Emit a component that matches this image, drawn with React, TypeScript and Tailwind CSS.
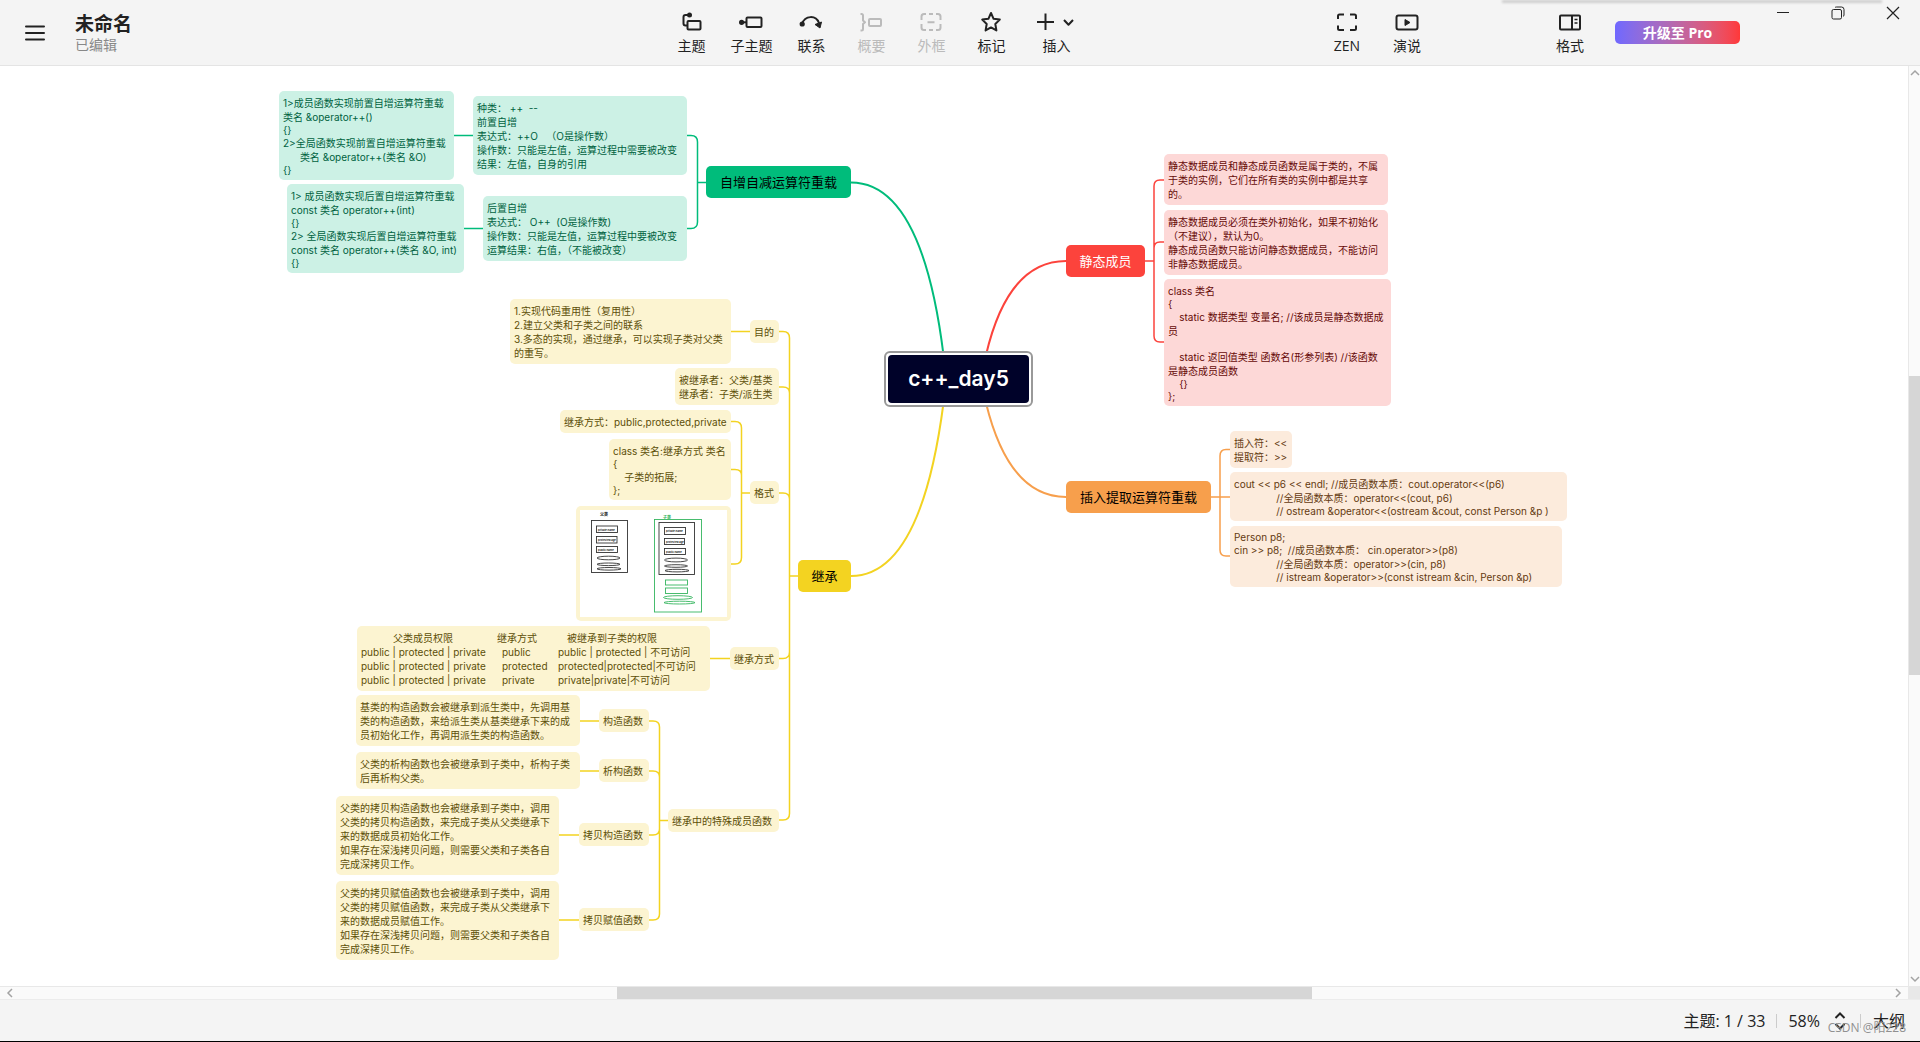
import type { ReactNode } from "react";

type Tone = "green" | "yellow" | "red" | "orange";

type Topic = {
  x: number;
  y: number;
  w: number;
  tone: Tone;
  lines: string[];
};

const toneClass: Record<Tone, string> = {
  green: "bg-[#ccf1e5] text-[#00623f]",
  yellow: "bg-[#fcf4d1] text-[#5c4f08]",
  red: "bg-[#fdd8d7] text-[#660a07]",
  orange: "bg-[#fcebdc] text-[#643a10]"
};

// x / y are canvas coordinates, the canvas starts right below the toolbar
const topics: Topic[] = [
  {
    x: 279, y: 25, w: 175, tone: "green",
    lines: [
      "1>成员函数实现前置自增运算符重载",
      "类名 &operator++()",
      "{}",
      "2>全局函数实现前置自增运算符重载",
      "      类名 &operator++(类名 &O)",
      "{}"
    ]
  },
  {
    x: 287, y: 118, w: 177, tone: "green",
    lines: [
      "1> 成员函数实现后置自增运算符重载",
      "const 类名 operator++(int)",
      "{}",
      "2> 全局函数实现后置自增运算符重载",
      "const 类名 operator++(类名 &O, int)",
      "{}"
    ]
  },
  {
    x: 473, y: 30, w: 214, tone: "green",
    lines: [
      "种类： ++  --",
      "前置自增",
      "表达式：++O   （O是操作数）",
      "操作数：只能是左值，运算过程中需要被改变",
      "结果：左值，自身的引用"
    ]
  },
  {
    x: 483, y: 130, w: 204, tone: "green",
    lines: ["后置自增", "表达式： O++  (O是操作数)", "操作数：只能是左值，运算过程中要被改变", "运算结果：右值，（不能被改变）"]
  },
  {
    x: 510, y: 233, w: 221, tone: "yellow",
    lines: ["1.实现代码重用性（复用性）", "2.建立父类和子类之间的联系", "3.多态的实现，通过继承，可以实现子类对父类", "的重写。"]
  },
  { x: 750, y: 254, w: 29, tone: "yellow", lines: ["目的"] },
  { x: 675, y: 302, w: 104, tone: "yellow", lines: ["被继承者：父类/基类", "继承者：子类/派生类"] },
  { x: 560, y: 344, w: 171, tone: "yellow", lines: ["继承方式：public,protected,private"] },
  { x: 609, y: 373, w: 122, tone: "yellow", lines: ["class 类名:继承方式 类名", "{", "    子类的拓展;", "};"] },
  { x: 750, y: 415, w: 29, tone: "yellow", lines: ["格式"] },
  { x: 730, y: 581, w: 49, tone: "yellow", lines: ["继承方式"] },
  {
    x: 356, y: 629, w: 224, tone: "yellow",
    lines: ["基类的构造函数会被继承到派生类中，先调用基", "类的构造函数，来给派生类从基类继承下来的成", "员初始化工作，再调用派生类的构造函数。"]
  },
  { x: 599, y: 643, w: 50, tone: "yellow", lines: ["构造函数"] },
  { x: 356, y: 686, w: 224, tone: "yellow", lines: ["父类的析构函数也会被继承到子类中，析构子类", "后再析构父类。"] },
  { x: 599, y: 693, w: 50, tone: "yellow", lines: ["析构函数"] },
  {
    x: 336, y: 730, w: 223, tone: "yellow",
    lines: ["父类的拷贝构造函数也会被继承到子类中，调用", "父类的拷贝构造函数，来完成子类从父类继承下", "来的数据成员初始化工作。", "如果存在深浅拷贝问题，则需要父类和子类各自", "完成深拷贝工作。"]
  },
  { x: 579, y: 757, w: 70, tone: "yellow", lines: ["拷贝构造函数"] },
  {
    x: 336, y: 815, w: 223, tone: "yellow",
    lines: ["父类的拷贝赋值函数也会被继承到子类中，调用", "父类的拷贝赋值函数，来完成子类从父类继承下", "来的数据成员赋值工作。", "如果存在深浅拷贝问题，则需要父类和子类各自", "完成深拷贝工作。"]
  },
  { x: 579, y: 842, w: 70, tone: "yellow", lines: ["拷贝赋值函数"] },
  { x: 668, y: 743, w: 111, tone: "yellow", lines: ["继承中的特殊成员函数"] },
  {
    x: 1164, y: 88, w: 224, tone: "red",
    lines: ["静态数据成员和静态成员函数是属于类的，不属", "于类的实例，它们在所有类的实例中都是共享", "的。"]
  },
  {
    x: 1164, y: 144, w: 224, tone: "red",
    lines: ["静态数据成员必须在类外初始化，如果不初始化", "（不建议），默认为0。", "静态成员函数只能访问静态数据成员，不能访问", "非静态数据成员。"]
  },
  {
    x: 1164, y: 213, w: 227, tone: "red",
    lines: [
      "class 类名",
      "{",
      "    static 数据类型 变量名; //该成员是静态数据成",
      "员",
      "",
      "    static 返回值类型 函数名(形参列表) //该函数",
      "是静态成员函数",
      "    {}",
      "};"
    ]
  },
  { x: 1230, y: 365, w: 62, tone: "orange", lines: ["插入符：<<", "提取符：>>"] },
  {
    x: 1230, y: 406, w: 337, tone: "orange",
    lines: [
      "cout << p6 << endl; //成员函数本质：cout.operator<<(p6)",
      "               //全局函数本质：operator<<(cout, p6)",
      "               // ostream &operator<<(ostream &cout, const Person &p )"
    ]
  },
  {
    x: 1230, y: 460, w: 332, tone: "orange",
    lines: [
      "Person p8;",
      "cin >> p8;  //成员函数本质： cin.operator>>(p8)",
      "               //全局函数本质：operator>>(cin, p8)",
      "               // istream &operator>>(const istream &cin, Person &p)"
    ]
  }
];

const accessRows = [
  ["public | protected | private", "public", "public | protected | 不可访问"],
  ["public | protected | private", "protected", "protected|protected|不可访问"],
  ["public | protected | private", "private", "private|private|不可访问"]
];

const branches = [
  { x: 706, y: 100, w: 145, label: "自增自减运算符重载", className: "bg-[#00bc7b] text-black" },
  { x: 798, y: 494, w: 53, label: "继承", className: "bg-[#f3d321] text-black" },
  { x: 1066, y: 179, w: 79, label: "静态成员", className: "bg-[#fc433c] text-white" },
  { x: 1066, y: 415, w: 145, label: "插入提取运算符重载", className: "bg-[#f79f4c] text-black" }
];

const hasCjk = (line: string) => /[\u3000-\u9fff\uff00-\uffef]/.test(line);

function TopicCard({ topic }: { topic: Topic }) {
  return (
    <div
      className={`absolute rounded-[5px] px-1 pt-[5px] pb-1 text-[10px] whitespace-pre ${toneClass[topic.tone]}`}
      style={{ left: topic.x, top: topic.y, width: topic.w }}
    >
      {topic.lines.map((line, index) => (
        <p key={index} className={hasCjk(line) ? "h-[14px] leading-[14px]" : "h-3 leading-3"}>
          {line}
        </p>
      ))}
    </div>
  );
}

function AccessTable() {
  return (
    <div className="absolute top-[560px] left-[357px] w-[353px] rounded-[5px] bg-[#fcf4d1] px-1 pt-[5px] pb-1 text-[10px] leading-[14px] whitespace-pre text-[#5c4f08]">
      <table className="text-left">
        <thead>
          <tr>
            <th className="w-[141px] pl-8 font-normal">父类成员权限</th>
            <th className="w-14 font-normal">
              <span className="-ml-[5px]">继承方式</span>
            </th>
            <th className="pl-[9px] font-normal">被继承到子类的权限</th>
          </tr>
        </thead>
        <tbody>
          {accessRows.map((row) => (
            <tr key={row[1]}>
              {row.map((cell) => (
                <td key={cell}>{cell}</td>
              ))}
            </tr>
          ))}
        </tbody>
      </table>
    </div>
  );
}

function Connectors() {
  return (
    <svg className="absolute top-0 left-0" width="1908" height="922" viewBox="0 66 1908 922" fill="none" strokeWidth="2" aria-hidden>
      <g stroke="#00bc7b">
        <path d="M851 182.5Q922 182.5 943.5 355" />
        <path strokeWidth="1.5" d="M454 135.5H473M464 228.5H483M687 135.5H691Q697.5 135.5 697.5 142V222Q697.5 228.5 691 228.5H687M697.5 182.5H706" />
      </g>
      <g stroke="#f3d321">
        <path d="M851 576Q921 576 943.5 403" />
        <path strokeWidth="1.5" d="M731 331.5H750M779 331.5H783Q789.5 331.5 789.5 338V813.5Q789.5 820 783 820H779M779 387H783Q789.5 387 789.5 393M779 493H783Q789.5 493 789.5 499M779 658.5H783Q789.5 658.5 789.5 652M789.5 576H798" />
        <path strokeWidth="1.5" d="M731 421.5H735Q741.5 421.5 741.5 428V557.5Q741.5 564 735 564H731M731 469.5H735Q741.5 469.5 741.5 475M741.5 493H750M710 658.5H730" />
        <path strokeWidth="1.5" d="M580 721H599M580 771H599M559 835H579M559 920H579M649 721H653Q659.5 721 659.5 727V914Q659.5 920 653 920H649M649 771H653Q659.5 771 659.5 777M649 835H653Q659.5 835 659.5 829M659.5 820.5H668" />
      </g>
      <g stroke="#fc433c">
        <path d="M1066 261Q1008 261 986 355" />
        <path strokeWidth="1.5" d="M1145 261H1154M1164 180H1160Q1154 180 1154 186V336Q1154 342 1160 342H1164M1164 242H1160Q1154 242 1154 248" />
      </g>
      <g stroke="#f79f4c">
        <path d="M1066 497Q1009 497 986 403" />
        <path strokeWidth="1.5" d="M1211 497H1230M1230 449.5H1226Q1220 449.5 1220 456V550Q1220 556 1226 556H1230" />
      </g>
    </svg>
  );
}

function ClassSketch() {
  return (
    <div className="absolute top-[440px] left-[576px] rounded-[5px] bg-[#fcf4d1] p-1">
      <svg width="147" height="107" viewBox="580 510 147 107" fill="none" className="bg-white" aria-hidden>
        <g stroke="#333" strokeWidth="0.9">
          <rect x="591.5" y="520.5" width="36" height="52" />
          <rect x="596.5" y="526" width="21" height="6.5" />
          <rect x="596.5" y="536.5" width="20.5" height="6.5" />
          <rect x="596.5" y="546.5" width="21" height="6" />
          <ellipse cx="608.5" cy="558" rx="11.5" ry="1.8" />
          <ellipse cx="608.5" cy="564.3" rx="11.5" ry="1.3" />
          <ellipse cx="609" cy="568.8" rx="12" ry="1.3" />
          <rect x="659" y="522.5" width="35.5" height="52" />
          <rect x="664.5" y="527.5" width="21" height="7" />
          <rect x="664.5" y="538.5" width="20" height="6" />
          <rect x="664.5" y="548.5" width="21" height="6" />
          <ellipse cx="676" cy="560" rx="11.5" ry="1.9" />
          <ellipse cx="676" cy="566" rx="11.5" ry="1.3" />
          <ellipse cx="677" cy="570.6" rx="12" ry="1.3" />
        </g>
        <g stroke="#35b55f" strokeWidth="0.9">
          <rect x="654.5" y="519.5" width="47" height="92.5" />
          <rect x="665.5" y="580" width="22" height="5" />
          <rect x="665.5" y="588" width="22" height="5.5" />
          <ellipse cx="678" cy="597.5" rx="14.5" ry="1.8" />
          <ellipse cx="679.5" cy="602.6" rx="15.5" ry="1.4" />
        </g>
        <g fill="#222" fontSize="2.6" fontWeight="bold">
          <text x="598" y="530.6">private:name</text>
          <text x="598" y="541.2">protected:age</text>
          <text x="598" y="551.2">public:name</text>
          <text x="666" y="532.2">private:name</text>
          <text x="666" y="542.8">protected:age</text>
          <text x="666" y="552.8">public:name</text>
        </g>
        <g fontSize="4" fontWeight="bold">
          <text x="600" y="515.5" fill="#222">
            父类
          </text>
          <text x="663" y="518.5" fill="#35b55f">
            子类
          </text>
        </g>
      </svg>
    </div>
  );
}

function Icon({ children, width = 24 }: { children: ReactNode; width?: number }) {
  return (
    <svg width={width} height="24" viewBox={`0 0 ${width} 24`} fill="none" stroke="currentColor" strokeWidth="2" strokeLinejoin="round" aria-hidden>
      {children}
    </svg>
  );
}

function ToolButton({ label, icon, disabled, wide }: { label: string; icon: ReactNode; disabled?: boolean; wide?: boolean }) {
  return (
    <button
      type="button"
      disabled={disabled}
      className={`flex flex-col items-center gap-[2px] text-sm leading-5 text-[#222] disabled:text-[#bbb] ${wide ? "w-[70px]" : "w-[60px]"}`}
    >
      {icon}
      {label}
    </button>
  );
}

function Toolbar() {
  return (
    <header className="relative flex h-[66px] shrink-0 items-start border-b border-[#e4e4e4] bg-[#f4f4f4] text-[#222]">
      <div className="flex w-[34.45%] items-center pt-3 pl-[25px]">
        <button type="button" aria-label="菜单" className="mr-[30px]">
          <svg width="20" height="16" viewBox="0 0 20 16" stroke="currentColor" strokeWidth="2" strokeLinecap="round" aria-hidden>
            <path d="M1 1.5H19M1 8H19M1 14.5H19" />
          </svg>
        </button>
        <div>
          <h1 className="text-[19px] leading-6 font-bold">未命名</h1>
          <p className="text-sm leading-[18px] text-[#888]">已编辑</p>
        </div>
      </div>

      <nav className="flex pt-[10px]">
        <ToolButton
          label="主题"
          icon={
            <Icon>
              <rect x="8.5" y="11" width="13" height="8.5" rx="1" />
              <path d="M8 15.5H6.5Q4.5 15.5 4.5 13.5V7Q4.5 5 6.5 5H10" />
              <circle cx="10.5" cy="5" r="2.5" fill="currentColor" stroke="none" />
            </Icon>
          }
        />
        <ToolButton
          label="子主题"
          icon={
            <Icon>
              <rect x="7.5" y="7.5" width="15" height="9.5" rx="1" />
              <path d="M2 12.3H7" />
              <circle cx="2.6" cy="12.3" r="2.6" fill="currentColor" stroke="none" />
            </Icon>
          }
        />
        <ToolButton
          label="联系"
          icon={
            <Icon>
              <path d="M3 14C6 5 17 5 20 13" />
              <circle cx="3.2" cy="14" r="2.6" fill="currentColor" stroke="none" />
              <path d="M16 14.5L22.5 12L21 18Z" fill="currentColor" strokeWidth="1" />
            </Icon>
          }
        />
        <ToolButton
          label="概要"
          disabled
          icon={
            <Icon>
              <path d="M1.5 4H2.5Q4 4 4 5.5V10.5L6 12.3L4 14V19Q4 20.5 2.5 20.5H1.5" />
              <rect x="10" y="9" width="12" height="7" rx="1" />
            </Icon>
          }
        />
        <ToolButton
          label="外框"
          disabled
          icon={
            <Icon>
              <path d="M2.5 10V6.5Q2.5 4 5 4H7M10 4H14M17 4H19Q21.5 4 21.5 6.5V10M21.5 14V17.5Q21.5 20 19 20H17M14 20H10M7 20H5Q2.5 20 2.5 17.5V14M8.5 12.3H15.5" />
            </Icon>
          }
        />
        <ToolButton
          label="标记"
          icon={
            <Icon>
              <path d="M12 3L14.6 8.8L20.8 9.6L16.3 14L17.4 20.4L12 17.4L6.6 20.4L7.7 14L3.2 9.6L9.4 8.8Z" />
            </Icon>
          }
        />
        <ToolButton
          label="插入"
          wide
          icon={
            <Icon width={38}>
              <path d="M8.5 3.5V20M0 12H17M27 10L31.5 14.8L36 10" />
            </Icon>
          }
        />
      </nav>

      <div className="ml-auto flex items-start">
        <div className="flex pt-[10px]">
          <ToolButton
            label="ZEN"
            icon={
              <Icon>
                <path d="M3 9V6Q3 4.5 4.5 4.5H9M15 4.5H19.5Q21 4.5 21 6V9M21 15.5V18.5Q21 20 19.5 20H15M9 20H4.5Q3 20 3 18.5V15.5" />
              </Icon>
            }
          />
          <ToolButton
            label="演说"
            icon={
              <Icon>
                <rect x="1.5" y="5.5" width="21" height="14" rx="2" />
                <path d="M10 9.5L15 12.5L10 15.5Z" fill="currentColor" strokeWidth="1" />
              </Icon>
            }
          />
        </div>
        <div className="ml-[103px] pt-[10px]">
          <ToolButton
            label="格式"
            icon={
              <Icon>
                <rect x="2" y="5.5" width="20" height="14" rx="1" />
                <path d="M14 5.5V19.5" />
                <path d="M16.5 9.5H19.5M16.5 13H19.5" strokeWidth="1.5" />
              </Icon>
            }
          />
        </div>
        <button
          type="button"
          className="mt-[21px] ml-[15px] h-[23px] w-[125px] rounded-[5px] bg-linear-to-r from-[#7068ff] to-[#ff3838] text-sm leading-[23px] font-bold text-white"
        >
          升级至 Pro
        </button>
        <div className="ml-[15px] flex">
          <button type="button" aria-label="最小化" className="flex h-[26px] w-[55px] items-center justify-center">
            <svg width="14" height="14" stroke="currentColor" aria-hidden>
              <path d="M1 6.5H13" />
            </svg>
          </button>
          <button type="button" aria-label="还原" className="flex h-[26px] w-[55px] items-center justify-center">
            <svg width="14" height="14" fill="none" stroke="currentColor" aria-hidden>
              <rect x="1" y="3.5" width="9.5" height="9.5" rx="1.5" />
              <path d="M4 1.5Q4.5 1 5.5 1H10.5Q13 1 13 3.5V9Q13 10 12 10.5" />
            </svg>
          </button>
          <button type="button" aria-label="关闭" className="flex h-[26px] w-[55px] items-center justify-center">
            <svg width="14" height="14" stroke="currentColor" strokeWidth="1.2" aria-hidden>
              <path d="M1 1L13 13M13 1L1 13" />
            </svg>
          </button>
        </div>
      </div>
      <div className="absolute top-0 right-[38px] h-[3px] w-[380px] bg-[#cfcfcf] blur-[1px]" />
    </header>
  );
}

function Chevron({ d }: { d: string }) {
  return (
    <svg width="12" height="12" fill="none" stroke="#a3a3a3" strokeWidth="1.5" aria-hidden>
      <path d={d} />
    </svg>
  );
}

function Canvas() {
  return (
    <div className="flex min-h-0 flex-1">
      <div className="flex min-w-0 flex-1 flex-col">
        <main className="relative min-h-0 flex-1 overflow-hidden bg-white font-[Inter,'Noto_Sans_CJK_SC',sans-serif]">
          <Connectors />
          {topics.map((topic) => (
            <TopicCard key={`${topic.x}-${topic.y}`} topic={topic} />
          ))}
          <AccessTable />
          <ClassSketch />
          {branches.map((branch) => (
            <div
              key={branch.label}
              className={`absolute flex h-8 items-center justify-center rounded-[5px] pb-px text-[13px] leading-5 ${branch.className}`}
              style={{ left: branch.x, top: branch.y, width: branch.w }}
            >
              {branch.label}
            </div>
          ))}
          <div className="absolute top-[285px] left-[884px] rounded-md border-2 border-[#999] bg-white p-[2px]">
            <h2 className="flex h-12 w-[141px] items-center justify-center rounded bg-[#000229] pb-px text-[21px] font-semibold text-white">
              c++_day5
            </h2>
          </div>
        </main>
        <div className="flex h-[13px] shrink-0 items-center border-t border-[#e8e8e8] bg-[#fafafa] px-1">
          <Chevron d="M8 2L4 6L8 10" />
          <div className="flex-[601]" />
          <div className="h-3 flex-[695] bg-[#d6d6d6]" />
          <div className="flex-[580]" />
          <Chevron d="M4 2L8 6L4 10" />
        </div>
      </div>
      <div className="flex w-3 shrink-0 flex-col items-center border-l border-[#e8e8e8] bg-[#fafafa]">
        <Chevron d="M2 9L6 5L10 9" />
        <div className="flex-[298]" />
        <div className="w-3 flex-[300] bg-[#d6d6d6]" />
        <div className="flex-[299]" />
        <Chevron d="M2 3L6 7L10 3" />
        <div className="h-[13px] w-3 bg-[#e8e8e8]" />
      </div>
    </div>
  );
}

function StatusBar() {
  return (
    <footer className="relative flex h-[43px] shrink-0 items-center justify-end border-t border-b border-t-[#ececec] border-b-black bg-[#f4f4f4] pt-px pr-[15px] text-base leading-5 text-[#222]">
      <span>主题: 1 / 33</span>
      <span className="mx-[11px] h-[14px] w-px bg-[#ccc]" />
      <span>58%</span>
      <button type="button" aria-label="缩放" className="ml-[14px]">
        <svg width="12" height="18" fill="none" stroke="currentColor" strokeWidth="2" aria-hidden>
          <path d="M1.5 6L6 1.5L10.5 6M1.5 12L6 16.5L10.5 12" />
        </svg>
      </button>
      <span className="mr-3 ml-[14px] h-[14px] w-px bg-[#ccc]" />
      <button type="button">大纲</button>
      <p className="absolute right-[14px] bottom-[3px] text-xs leading-5 text-[#909090]">CSDN @阳228</p>
    </footer>
  );
}

export default function App() {
  return (
    <div className="flex h-screen flex-col overflow-hidden font-['Open_Sans','Noto_Sans_CJK_SC',sans-serif]">
      <Toolbar />
      <Canvas />
      <StatusBar />
    </div>
  );
}
